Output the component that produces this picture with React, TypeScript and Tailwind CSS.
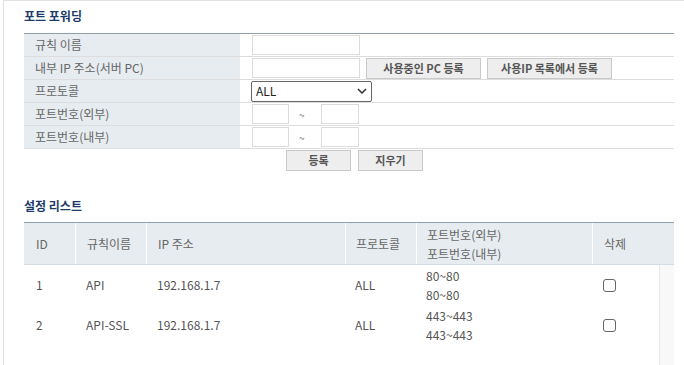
import React from "react";

const labelCls =
  "w-[216px] h-full flex items-center pl-[11px] bg-[#e6ecf0] text-[12px] text-[#666]";

const Input = ({ w }: { w: string }) => (
  <div className={`${w} h-[20px] border border-[#dcdcdc] bg-white`} />
);

const GrayButton = ({ label, w }: { label: string; w: string }) => (
  <button
    className={`${w} h-[21px] border border-[#c9c9c9] bg-[#eeeeee] text-[11px] font-bold text-[#555] leading-none`}
  >
    {label}
  </button>
);

const FormRow = ({ label, children }: { label: string; children?: React.ReactNode }) => (
  <div className="flex h-[23px] border-b border-[#dddddd]">
    <div className={labelCls}>{label}</div>
    <div className="flex items-center pl-[12px]">{children}</div>
  </div>
);

const PortRange = () => (
  <>
    <Input w="w-[37px]" />
    <span className="w-[32px] pl-[10px] text-left text-[10px] text-[#777]">~</span>
    <Input w="w-[38px]" />
  </>
);

const rules = [
  { id: 1, name: "API", ip: "192.168.1.7", proto: "ALL", ext: "80~80", int: "80~80" },
  { id: 2, name: "API-SSL", ip: "192.168.1.7", proto: "ALL", ext: "443~443", int: "443~443" },
];

const cols = "grid-cols-[51px_71px_199px_71px_176px_82px]";
const bodyCols = "grid-cols-[51px_71px_199px_71px_176px_67px]";

export default function App() {
  return (
    <div className="w-[684px] h-[365px] overflow-hidden bg-white font-['Noto_Sans_CJK_KR','Noto_Sans',sans-serif]">
      <div className="ml-[3px] h-full border-l border-t border-[#e2e2e2] pl-[20px]">
        <div className="w-[650px]">
          <h2 className="pt-[5px] mb-[7px] text-[12px] leading-[20px] font-bold text-[#1d3b6a]">
            포트 포워딩
          </h2>

          <div className="border-t border-[#8e9fad]">
            <FormRow label="규칙 이름">
              <Input w="w-[108px]" />
            </FormRow>
            <FormRow label="내부 IP 주소(서버 PC)">
              <Input w="w-[108px]" />
              <div className="ml-[6px] flex gap-[6px]">
                <GrayButton label="사용중인 PC 등록" w="w-[115px]" />
                <GrayButton label="사용IP 목록에서 등록" w="w-[125px]" />
              </div>
            </FormRow>
            <FormRow label="프로토콜">
              <div className="-ml-[1px] w-[121px] h-[21px] border border-[#666] rounded-[2px] flex items-center justify-between pl-[4px] pr-[4px] text-[12px] text-[#222]">
                <span>ALL</span>
                <svg width="10" height="6" viewBox="0 0 10 6" fill="none">
                  <path d="M1 1l4 4 4-4" stroke="#333" strokeWidth="1.5" />
                </svg>
              </div>
            </FormRow>
            <FormRow label="포트번호(외부)">
              <PortRange />
            </FormRow>
            <FormRow label="포트번호(내부)">
              <PortRange />
            </FormRow>
          </div>

          <div className="flex gap-[7px] pl-[262px] pt-[1px]">
            <GrayButton label="등록" w="w-[65px]" />
            <GrayButton label="지우기" w="w-[65px]" />
          </div>

          <h2 className="mt-[25px] mb-[6px] text-[12px] leading-[20px] font-bold text-[#1d3b6a]">
            설정 리스트
          </h2>

          <div className="border-t border-[#8e9fad]">
            <div className={`grid ${cols} h-[42px] bg-[#e6ecf0] border-b border-[#d5dde3] text-[12px] text-[#666]`}>
              <div className="flex items-center pl-[12px]">ID</div>
              <div className="flex items-center pl-[11px] border-l border-white">규칙이름</div>
              <div className="flex items-center pl-[11px] border-l border-white">IP 주소</div>
              <div className="flex items-center pl-[10px] border-l border-white">프로토콜</div>
              <div className="flex flex-col justify-center pl-[10px] border-l border-white leading-[19px]">
                <span>포트번호(외부)</span>
                <span>포트번호(내부)</span>
              </div>
              <div className="flex items-center pl-[11px] border-l border-white">삭제</div>
            </div>

            <div className="flex">
              <div className="w-[635px] pb-[20px]">
                {rules.map((r) => (
                  <div key={r.id} className={`grid ${bodyCols} h-[40px] text-[12px] text-[#555]`}>
                    <div className="flex items-center pl-[12px]">{r.id}</div>
                    <div className="flex items-center pl-[11px]">{r.name}</div>
                    <div className="flex items-center pl-[11px]">{r.ip}</div>
                    <div className="flex items-center pl-[10px]">{r.proto}</div>
                    <div className="flex flex-col justify-center pl-[10px] leading-[19px]">
                      <span>{r.ext}</span>
                      <span>{r.int}</span>
                    </div>
                    <div className="flex items-center pl-[11px]">
                      <span className="w-[13px] h-[13px] border border-[#666] rounded-[3px] bg-white" />
                    </div>
                  </div>
                ))}
              </div>
              <div className="w-[15px] h-[120px] bg-[#f8f8f8] border-l border-[#e8e8e8]" />
            </div>
          </div>
        </div>
      </div>
    </div>
  );
}
